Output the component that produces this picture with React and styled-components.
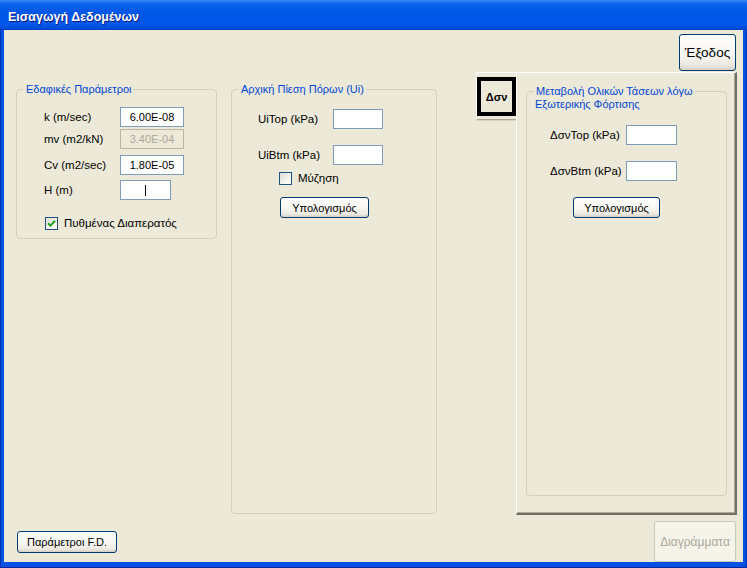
import React from 'react';
import styled, { createGlobalStyle } from 'styled-components';

const Global = createGlobalStyle`
  html, body { margin: 0; padding: 0; background: #ffffff; }
  body { font-family: "Liberation Sans", Arial, sans-serif; font-size: 11px; color: #000; }
  * { box-sizing: border-box; }
`;

const Window = styled.div`
  width: 747px;
  height: 568px;
  display: flex;
  flex-direction: column;
  background: #0551e2;
`;

const TitleBar = styled.div`
  height: 30px;
  flex: none;
  display: flex;
  align-items: center;
  padding: 4px 0 0 8px;
  background: linear-gradient(180deg, #3b8cf5 0%, #0a64ec 12%, #0055e5 45%, #0058ea 80%, #0050dc 94%, #0037c0 100%);
  color: #ffffff;
  font-weight: bold;
  font-size: 12.5px;
  text-shadow: 1px 1px 0 #0a1883;
`;

const Frame = styled.div`
  flex: 1;
  display: flex;
  padding: 0 4px 6px 4px;
  background: #0551e2;
  box-shadow: inset 1px 0 #0033b8, inset -1px 0 #0033b8, inset 0 -1px #0029a0;
`;

const Client = styled.div`
  flex: 1;
  display: flex;
  flex-direction: column;
  background: #ece9d8;
`;

const TopBar = styled.div`
  height: 42px;
  flex: none;
  display: flex;
  justify-content: flex-end;
  align-items: flex-start;
  padding: 4px 7px 0 0;
`;

const Main = styled.div`
  height: 443px;
  flex: none;
  display: flex;
  align-items: flex-start;
`;

const Bottom = styled.div`
  flex: 1;
  display: flex;
  justify-content: space-between;
  align-items: flex-start;
  padding: 0 7px 0 13px;
`;

const Btn = styled.button`
  width: ${p => p.$w}px;
  height: ${p => p.$h}px;
  margin: ${p => p.$m || '0'};
  padding: 0;
  font-family: "Liberation Sans", Arial, sans-serif;
  font-size: ${p => p.$fs || 11}px;
  color: #000;
  border: 1px solid #003c74;
  border-radius: 3px;
  background: linear-gradient(180deg, #ffffff 0%, #f7f6f1 55%, #ebe9e0 85%, #d6d0c5 100%);
  box-shadow: inset 0 -1px #d8d3c8;
  display: flex;
  align-items: center;
  justify-content: center;
  flex: none;
  &:disabled {
    border-color: #cac8bb;
    background: #f5f4ea;
    color: #aca899;
    box-shadow: none;
  }
`;

const Group = styled.fieldset`
  width: ${p => p.$w}px;
  height: ${p => p.$h}px;
  margin: ${p => p.$m};
  padding: 0;
  border: 1px solid #d0d0bf;
  border-radius: 4px;
  flex: none;
  min-width: 0;
`;

const Legend = styled.legend`
  margin-left: 7px;
  padding: 0 2px;
  line-height: 13px;
  height: 13px;
  font-size: 11px;
  color: #0046d5;
`;

const LegendMore = styled.div`
  padding-left: 8px;
  line-height: 13px;
  color: #0046d5;
`;

const FormRow = styled.div`
  display: grid;
  grid-template-columns: ${p => p.$label}px auto;
  align-items: center;
  margin-top: ${p => p.$mt}px;
  padding-left: ${p => p.$pl}px;
`;

const Label = styled.span`
  white-space: nowrap;
  line-height: 13px;
  font-size: 11.5px;
`;

const Field = styled.div`
  width: ${p => p.$w}px;
  height: 20px;
  border: 1px solid ${p => (p.$disabled ? '#b9b6a9' : '#7f9db9')};
  background: ${p => (p.$disabled ? '#ece9d8' : '#ffffff')};
  color: ${p => (p.$disabled ? '#aca899' : '#000000')};
  display: flex;
  align-items: center;
  justify-content: center;
  font-size: 11px;
  line-height: 13px;
`;

const Caret = styled.span`
  width: 1px;
  height: 11px;
  background: #000;
`;

const CheckRow = styled.label`
  display: flex;
  align-items: center;
  gap: 6px;
  height: 13px;
  margin-top: ${p => p.$mt}px;
  padding-left: ${p => p.$pl}px;
  line-height: 13px;
  font-size: 11.5px;
`;

const Box = styled.span`
  width: 13px;
  height: 13px;
  flex: none;
  border: 1px solid #1c5180;
  background: linear-gradient(135deg, #dcdcd7 0%, #f0f0ea 50%, #ffffff 100%);
  display: flex;
  align-items: center;
  justify-content: center;
`;

const BtnRow = styled.div`
  display: flex;
  margin-top: ${p => p.$mt}px;
  padding-left: ${p => p.$pl}px;
`;

const TabSet = styled.div`
  display: flex;
  align-items: flex-start;
  margin-left: 39px;
`;

const Tab = styled.div`
  width: 40px;
  height: 48px;
  border-top: 1px solid #ffffff;
  border-left: 1px solid #ffffff;
  border-bottom: 1px solid #aca899;
  box-shadow: 0 1px 0 #d6d2c2;
  padding-top: 4px;
`;

const TabFocus = styled.div`
  width: 39px;
  height: 39px;
  border: 4px solid #000;
  display: flex;
  align-items: center;
  justify-content: center;
  font-weight: bold;
  font-size: 11px;
`;

const Panel = styled.div`
  width: 221px;
  height: 443px;
  border-top: 1px solid #ffffff;
  border-left: 1px solid #ffffff;
  border-right: 2px solid #716f64;
  border-bottom: 2px solid #716f64;
  box-shadow: inset -1px -1px 0 #aca899;
  padding: 12px 0 0 9px;
`;

const Check = () => (
  <svg width="9" height="9" viewBox="0 0 9 9">
    <path d="M1 4.2 L3.4 6.6 L8 1.8" fill="none" stroke="#21a121" strokeWidth="2" />
  </svg>
);

export default function App() {
  return (
    <>
      <Global />
      <Window>
        <TitleBar>Εισαγωγή Δεδομένων</TitleBar>
        <Frame>
          <Client>
            <TopBar>
              <Btn $w={57} $h={37} $fs={13.5}>Έξοδος</Btn>
            </TopBar>
            <Main>
              <Group $w={201} $h={156} $m="11px 0 0 12px">
                <Legend>Εδαφικές Παράμετροι</Legend>
                <FormRow $label={76} $pl={27} $mt={11}>
                  <Label>k (m/sec)</Label>
                  <Field $w={64}>6.00E-08</Field>
                </FormRow>
                <FormRow $label={76} $pl={27} $mt={2}>
                  <Label>mv (m2/kN)</Label>
                  <Field $w={64} $disabled>3.40E-04</Field>
                </FormRow>
                <FormRow $label={76} $pl={27} $mt={6}>
                  <Label>Cv (m2/sec)</Label>
                  <Field $w={64}>1.80E-05</Field>
                </FormRow>
                <FormRow $label={76} $pl={27} $mt={5}>
                  <Label>H (m)</Label>
                  <Field $w={51}><Caret /></Field>
                </FormRow>
                <CheckRow $pl={28} $mt={17}>
                  <Box><Check /></Box>
                  Πυθμένας Διαπερατός
                </CheckRow>
              </Group>

              <Group $w={206} $h={431} $m="11px 0 0 14px">
                <Legend>Αρχική Πίεση Πόρων (Ui)</Legend>
                <FormRow $label={75} $pl={26} $mt={13}>
                  <Label>UiTop (kPa)</Label>
                  <Field $w={50} />
                </FormRow>
                <FormRow $label={75} $pl={26} $mt={16}>
                  <Label>UiBtm (kPa)</Label>
                  <Field $w={50} />
                </FormRow>
                <CheckRow $pl={47} $mt={7}>
                  <Box />
                  Μύζηση
                </CheckRow>
                <BtnRow $pl={48} $mt={12}>
                  <Btn $w={89} $h={21}>Υπολογισμός</Btn>
                </BtnRow>
              </Group>

              <TabSet>
                <Tab>
                  <TabFocus>Δσν</TabFocus>
                </Tab>
                <Panel>
                  <Group $w={201} $h={411} $m="0">
                    <Legend>Μεταβολή Ολικών Τάσεων λόγω</Legend>
                    <LegendMore>Εξωτερικής Φόρτισης</LegendMore>
                    <FormRow $label={76} $pl={23} $mt={14}>
                      <Label>ΔσνTop (kPa)</Label>
                      <Field $w={51} />
                    </FormRow>
                    <FormRow $label={76} $pl={23} $mt={16}>
                      <Label>ΔσνBtm (kPa)</Label>
                      <Field $w={51} />
                    </FormRow>
                    <BtnRow $pl={46} $mt={16}>
                      <Btn $w={87} $h={21}>Υπολογισμός</Btn>
                    </BtnRow>
                  </Group>
                </Panel>
              </TabSet>
            </Main>
            <Bottom>
              <Btn $w={100} $h={22} $m="16px 0 0 0">Παράμετροι F.D.</Btn>
              <Btn $w={82} $h={41} $m="6px 0 0 0" $fs={12} disabled>Διαγράμματα</Btn>
            </Bottom>
          </Client>
        </Frame>
      </Window>
    </>
  );
}
